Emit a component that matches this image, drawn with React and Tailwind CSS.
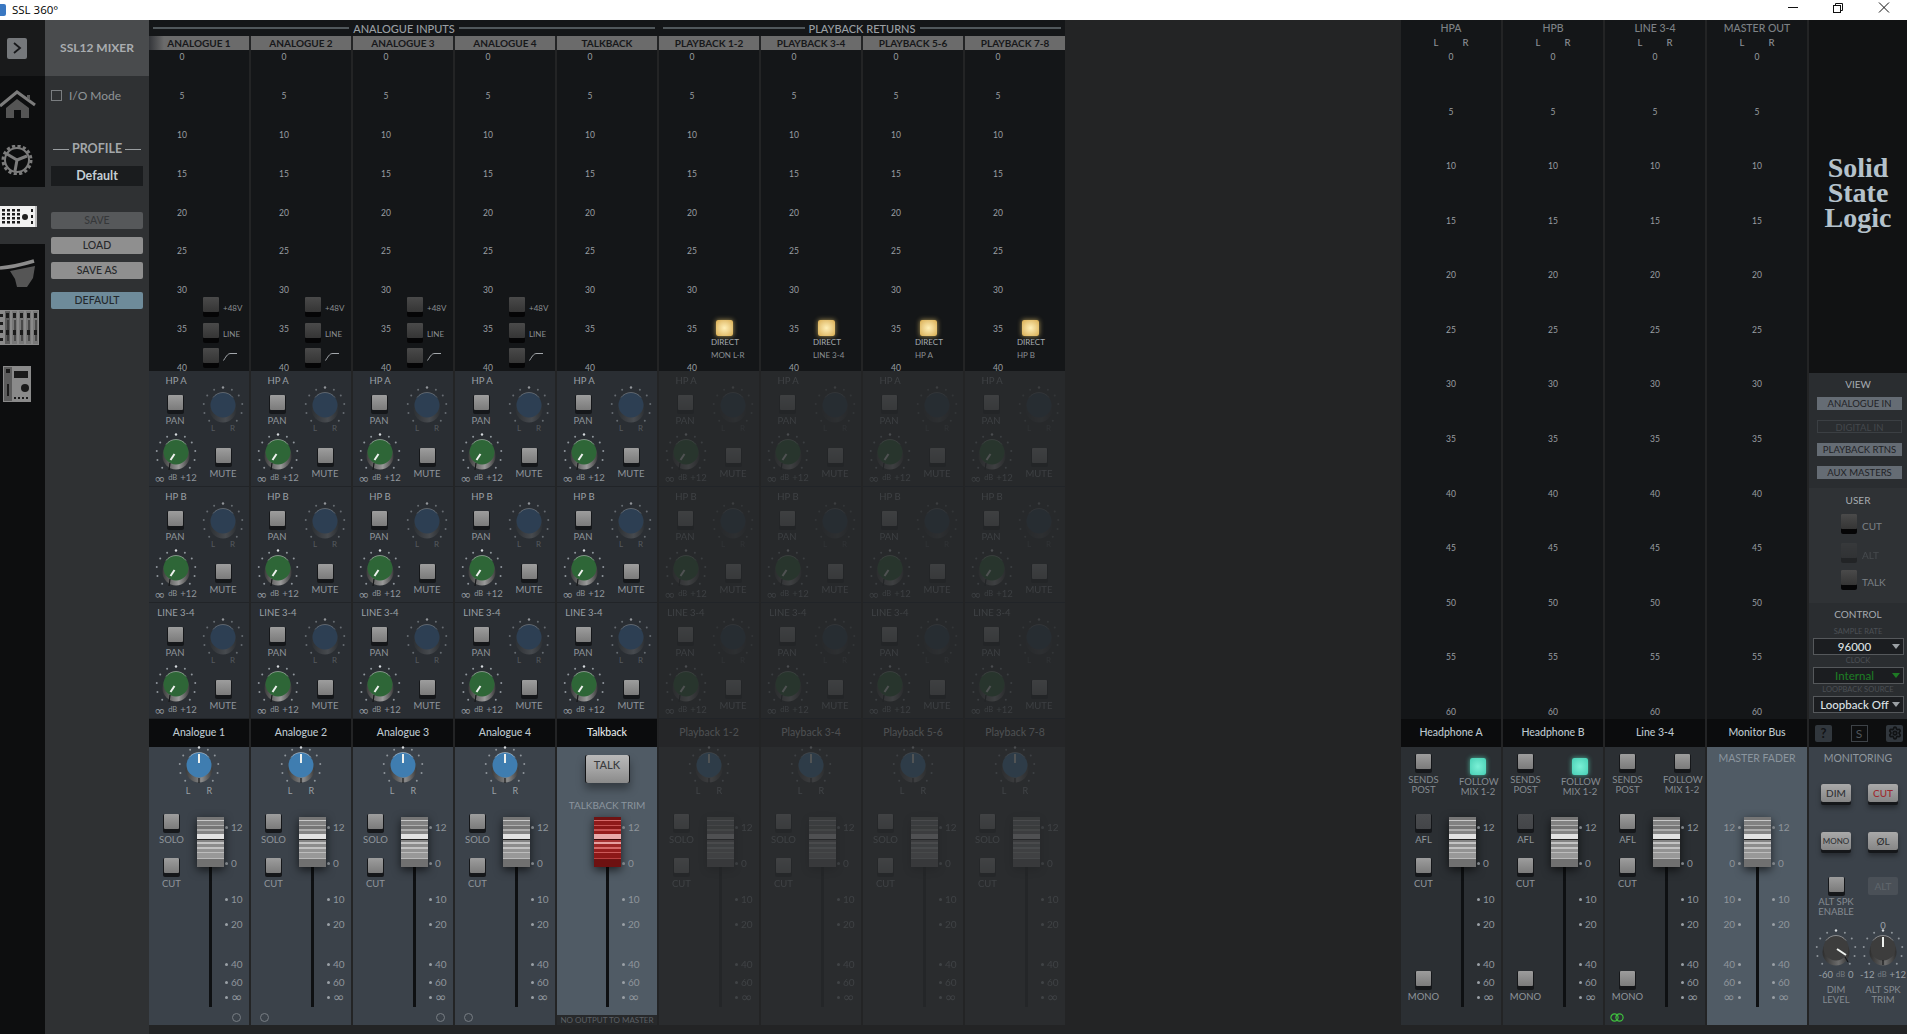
import React, { useId } from 'react';
import { Settings } from 'lucide-react';

const FONT = { fontFamily: 'Lato, "Liberation Sans", sans-serif' };

const FADER_TICKS = [
    ['12', 'h-[36px]'],
    ['0', 'h-[36px]'],
    ['10', 'h-[25px]'],
    ['20', 'h-[40px]'],
    ['40', 'h-[18px]'],
    ['60', 'h-[15px]'],
    ['∞', 'h-[12px]'],
];

const GREY_STRIPES = [
    [0, 3, '#767676'], [3, 1, '#c8c8c8'], [4, 4, '#828282'], [8, 1, '#b0b0b0'], [9, 3, '#767676'], [12, 2, '#adadad'],
    [14, 3, '#848484'], [17, 5, '#e2e2e2'], [22, 1, '#222222'], [23, 2, '#848484'], [25, 2, '#c4c4c4'], [27, 3, '#8c8c8c'],
    [30, 2, '#c2c2c2'], [32, 3, '#929292'], [35, 1, '#bcbcbc'], [36, 5, '#989898'], [41, 1, '#b8b8b8'], [42, 8, '#707070'],
];

const RED_STRIPES = [
    [0, 3, '#6f1313'], [3, 1, '#d86a6a'], [4, 4, '#8f1a1a'], [8, 1, '#c65252'], [9, 3, '#8a1717'], [12, 2, '#c65252'],
    [14, 3, '#941c1c'], [17, 5, '#e8a9a9'], [22, 1, '#3a0808'], [23, 2, '#a43232'], [25, 2, '#e6a0a0'], [27, 3, '#9c2626'],
    [30, 2, '#d66a6a'], [32, 3, '#951d1d'], [35, 1, '#cc5a5a'], [36, 5, '#8d1818'], [41, 1, '#b84040'], [42, 8, '#6d1111'],
];

const InfinityMark = ({ className = 'text-[14px]' }) => (
    <span className={`font-['DejaVu_Sans'] leading-none ${className}`}>∞</span>
);

const Label = ({ children, className = 'h-[14px]' }) => (
    <div className={`flex items-center justify-center leading-none whitespace-nowrap text-[9.5px] text-[#8f959b] ${className}`}>
        {children}
    </div>
);

const SquareButton = ({ off }) => (
    <div className="mx-auto w-[17px] h-[19px] rounded-[2px] bg-[#15171a]">
        <div className={`mx-auto w-[15px] h-[15px] rounded-[1px] bg-linear-to-b ${off ? 'from-[#4a4c4f] to-[#434548]' : 'from-[#9d9d9d] to-[#7b7b7b]'}`} />
    </div>
);

const DarkButton = () => (
    <div className="w-[16px] h-[20px] rounded-[2px] bg-[#050506]">
        <div className="w-[16px] h-[15px] rounded-[1px] bg-linear-to-b from-[#4a4a4a] to-[#353535]" />
    </div>
);

const Knob = ({ cap, ptr, notch = [0, 10, 0, 16], height = 36, cy = 18, skirt = ['#7b7b7b', '#3a3a3a'] }) => {
    const id = useId();
    const dots = Array.from({ length: 11 }, (_, i) => {
        const a = ((-135 + i * 27) * Math.PI) / 180;
        return [22 + 19.5 * Math.sin(a), cy - 19.5 * Math.cos(a), i === 5];
    });
    return (
        <svg width="44" height={height} className="mx-auto block overflow-visible">
            <defs>
                <linearGradient id={id} x1="0" y1="0" x2="1" y2="0">
                    <stop offset="0" stopColor={skirt[1]} />
                    <stop offset="0.6" stopColor={skirt[0]} />
                    <stop offset="1" stopColor={skirt[1]} />
                </linearGradient>
            </defs>
            {dots.map(([x, y, top], i) => (
                <circle key={i} cx={x} cy={y} r={top ? 1.2 : 1} fill={top ? '#d6dadd' : '#8e959b'} />
            ))}
            <circle cx="22" cy={cy + 2} r="13.5" fill={`url(#${id})`} />
            <circle cx="22" cy={cy - 2} r="12.5" fill={cap} />
            <path d={`M12 ${cy - 9.5} A12.5 12.5 0 0 1 32 ${cy - 9.5}`} fill="none" stroke="#ffffff" strokeOpacity="0.4" strokeWidth="1" />
            <line x1={22 + notch[0]} y1={cy + notch[1]} x2={22 + notch[2]} y2={cy + notch[3]} stroke="#17181a" strokeWidth="1.2" />
            {ptr && <line x1={22 + ptr[0]} y1={cy + ptr[1]} x2={22 + ptr[2]} y2={cy + ptr[3]} stroke="#eef1ee" strokeWidth="2" />}
        </svg>
    );
};

const FaderCap = ({ red }) => (
    <svg width="27" height="50" className="absolute top-[22px] left-[3px] drop-shadow-[0_3px_5px_rgba(0,0,0,0.65)]">
        {(red ? RED_STRIPES : GREY_STRIPES).map(([y, h, fill]) => (
            <rect key={y} x="0" y={y} width="27" height={h} fill={fill} />
        ))}
    </svg>
);

const Fader = ({ red, className = 'w-[33px]' }) => (
    <div className={`relative pt-[23px] shrink-0 ${className}`}>
        <div className="mx-auto w-[3px] h-[189px] bg-[#0e1012]" />
        <FaderCap red={red} />
    </div>
);

const Scale = ({ left, className = '' }) => (
    <div className={`pt-[26px] ${className}`}>
        {FADER_TICKS.map(([label, h]) => (
            <div key={label} className={h}>
                <div className={`flex items-center gap-[3px] h-[12px] text-[10px] leading-none text-[#8f959b] ${left ? 'justify-end' : ''}`}>
                    {!left && <span className="w-[3px] h-[3px] rounded-full bg-[#9aa0a6]" />}
                    {label === '∞' ? <InfinityMark /> : <span>{label}</span>}
                    {left && <span className="w-[3px] h-[3px] rounded-full bg-[#9aa0a6]" />}
                </div>
            </div>
        ))}
    </div>
);

const MeterScale = ({ count, step, className }) => (
    <div className={`relative top-[1px] flex flex-col justify-between text-[8.5px] leading-[12px] text-[#9a9ea2] text-center ${className}`}>
        {Array.from({ length: count }, (_, i) => (
            <div key={i}>{i * step}</div>
        ))}
    </div>
);

const CurveIcon = () => (
    <svg width="15" height="9" className="mt-[4px]">
        <path d="M0.5 8.5 C4 3 5 1.5 8 1.5 L14 1.5" fill="none" stroke="#a4a8ac" strokeWidth="1" />
    </svg>
);

const InputSwitches = () => (
    <div className="pt-[247px] ml-[-12px] text-[8px] leading-none text-[#8a8e92]">
        {['+48V', 'LINE', null].map((t, i) => (
            <div key={i} className={`flex gap-[4px] ${i === 2 ? 'h-[20px]' : i === 0 ? 'h-[26px]' : 'h-[25px]'}`}>
                <DarkButton />
                {t ? <span className="mt-[7px]">{t}</span> : <CurveIcon />}
            </div>
        ))}
    </div>
);

const DirectSwitch = ({ dest }) => (
    <div className="pt-[270px] ml-[-14px] text-[8px] leading-none text-[#8a8e92]">
        <div className="ml-[5px] w-[17px] h-[16px] rounded-[2px] bg-radial from-[#fff0b8] to-[#d8ac4e] shadow-[0_0_5px_rgba(240,205,110,0.7)]" />
        <div className="mt-[2px] h-[10px] w-[26px] text-center text-[8px] text-[#a6abb0]">DIRECT</div>
        <div className="mt-[3px] h-[10px] whitespace-nowrap">{dest}</div>
    </div>
);

const Send = ({ name, dim }) => (
    <div className={`h-[116px] border-b border-[#212428] ${dim ? 'bg-[#27292b]' : 'bg-[#2a2e33]'}`}>
        <div className={dim ? 'opacity-20' : ''}>
            <div className="pl-[2px] w-[52px] h-[20px] flex items-center justify-center text-[9.5px] leading-none text-[#9aa0a6] whitespace-nowrap">{name}</div>
            <div className="grid grid-cols-[52px_44px] grid-rows-[44px_52px]">
                <div className="pt-[4px]">
                    <SquareButton />
                    <Label>PAN</Label>
                </div>
                <div>
                    <div className="opacity-60">
                        <Knob cap="#2f4b69" height={32} cy={16} skirt={['#5b5e62', '#2f3235']} notch={[0, 9, 0, 9]} />
                    </div>
                    <div className="flex justify-between px-[10px] h-[10px] items-center text-[8px] leading-none text-[#555a5f]">
                        <span>L</span>
                        <span>R</span>
                    </div>
                </div>
                <div className="ml-[1px]">
                    <Knob cap="#2e6637" ptr={[-5.5, 6, -1.5, 0]} notch={[-6, 9, -7, 16]} height={37} cy={19} skirt={['#9a9a9a', '#3c3c3c']} />
                    <div className="flex items-center justify-center gap-[3px] h-[12px] text-[9px] leading-none text-[#8f959b] whitespace-nowrap">
                        <InfinityMark className="text-[13px]" />
                        <span className="text-[7.5px]">dB</span>
                        <span className="text-[9.5px]">+12</span>
                    </div>
                </div>
                <div className="pt-[13px]">
                    <SquareButton />
                    <Label>MUTE</Label>
                </div>
            </div>
        </div>
    </div>
);

const Name = ({ children, dim, bright }) => (
    <div className={`h-[28px] flex items-center justify-center text-[10.5px] font-medium whitespace-nowrap ${dim ? 'bg-[#252628] text-[#4c4e50]' : bright ? 'bg-[#0b0c0d] text-[#e4e8ea]' : 'bg-[#0b0c0d] text-[#bdc8cf]'}`}>
        {children}
    </div>
);

const ChannelFader = ({ dim, link }) => (
    <div className={`relative h-[278px] ${dim ? 'bg-[#2a2c2e]' : 'bg-[#3b424a]'}`}>
        <div className={dim ? 'opacity-20' : ''}>
            <div className="pt-[2px] h-[38px]">
                <Knob cap="#3f7db0" ptr={[0, -4, 0, -13]} notch={[0, 11, 0, 16]} skirt={['#8a8a8a', '#3a3a3a']} />
            </div>
            <div className="flex justify-center gap-[16px] h-[10px] items-center text-[9px] leading-none text-[#9aa0a6]">
                <span>L</span>
                <span>R</span>
            </div>
            <div className="flex">
                <div className="w-[45px] shrink-0 pt-[19px]">
                    <SquareButton />
                    <Label>SOLO</Label>
                    <div className="mt-[11px]">
                        <SquareButton />
                        <Label>CUT</Label>
                    </div>
                </div>
                <Fader />
                <Scale className="-ml-[2px]" />
            </div>
        </div>
        {link === 'right' && <span className="absolute left-[83px] bottom-[3px] w-[9px] h-[9px] rounded-full border border-[#777d83]" />}
        {link === 'left' && <span className="absolute left-[9px] bottom-[3px] w-[9px] h-[9px] rounded-full border border-[#777d83]" />}
    </div>
);

const TalkbackFader = () => (
    <div className="h-[278px] bg-[#27292b]">
        <div className="h-[268px] bg-[#505b65]">
            <div className="pt-[8px]">
                <div className="mx-auto w-[45px] h-[28px] rounded-[2px] bg-[#121315] shadow-[0_6px_8px_rgba(0,0,0,0.35)]">
                    <div className="mx-auto w-[43px] h-[28px] rounded-[2px] bg-linear-to-b from-[#b9b9b9] via-[#a4a4a4] to-[#8a8a8a] text-center text-[11px] font-medium leading-[20px] text-[#3a3c3e]">
                        TALK
                    </div>
                </div>
            </div>
            <div className="mt-[16px] h-[12px] flex items-center justify-center text-[10px] leading-none text-[#8b959e]">TALKBACK TRIM</div>
            <div className="flex -mt-[16px] pl-[34px]">
                <Fader red />
                <Scale className="-ml-[2px]" />
            </div>
        </div>
        <div className="h-[10px] flex items-center justify-center text-[8px] leading-none whitespace-nowrap text-[#5c6065]">NO OUTPUT TO MASTER</div>
    </div>
);

const Channel = ({ title, name, dim, link, talkback, dest, edge }) => (
    <div className="w-[100px] mr-[2px]">
        <div className={`h-[14px] text-center text-[10px] font-bold leading-[14px] text-[#17181a] whitespace-nowrap ${edge ? 'bg-linear-to-r from-[#34363a] to-[#6b6b6b] to-[15%]' : 'bg-[#6b6b6b]'}`}>{title}</div>
        <div className="relative z-10 flex h-[321px] bg-[#141618]">
            <MeterScale count={9} step={5} className="w-[66px] h-[323px]" />
            {dest ? <DirectSwitch dest={dest} /> : !talkback && <InputSwitches />}
        </div>
        <Send name="HP A" dim={dim} />
        <Send name="HP B" dim={dim} />
        <Send name="LINE 3-4" dim={dim} />
        <Name dim={dim} bright={talkback}>{name}</Name>
        {talkback ? <TalkbackFader /> : <ChannelFader dim={dim} link={link} />}
    </div>
);

const StripMeter = ({ title }) => (
    <div className="h-[699px] bg-[#141618]">
        <div className="h-[16px] flex items-center justify-center text-[10.5px] font-medium leading-none text-[#7e8286] whitespace-nowrap">{title}</div>
        <div className="h-[14px] flex justify-center gap-[24px] items-center text-[9.5px] font-medium leading-none text-[#8d9195]">
            <span>L</span>
            <span>R</span>
        </div>
        <MeterScale count={13} step={5} className="h-[667px]" />
    </div>
);

const MiniLabel = ({ lines, className = '' }) => (
    <div className={`text-center text-[9.5px] leading-[10px] text-[#858b91] whitespace-nowrap ${className}`}>
        {lines.map((l) => <div key={l}>{l}</div>)}
    </div>
);

const OutputStrip = ({ title, name, follow, afl, link }) => (
    <div className="w-[100px] mr-[2px]">
        <StripMeter title={title} />
        <Name>{name}</Name>
        <div className="relative h-[278px] bg-[#2b2f33]">
            <div className="flex h-[48px]">
                <div className="w-[45px] pt-[7px]">
                    <SquareButton />
                    <MiniLabel lines={['SENDS', 'POST']} className="mt-[2px]" />
                </div>
                <div className="ml-[13px] w-[38px]">
                    {follow ? (
                        <div className="mt-[11px] mb-[1px] mx-auto w-[16px] h-[17px] rounded-[2px] bg-radial from-[#7af0d6] to-[#45cfb4] shadow-[0_0_5px_rgba(90,235,200,0.7)]" />
                    ) : (
                        <div className="mt-[7px]"><SquareButton /></div>
                    )}
                    <MiniLabel lines={['FOLLOW', 'MIX 1-2']} className="mt-[2px]" />
                </div>
            </div>
            <div className="flex">
                <div className="w-[45px] shrink-0 pt-[19px]">
                    <SquareButton off={afl} />
                    <Label>AFL</Label>
                    <div className="mt-[11px]">
                        <SquareButton />
                        <Label>CUT</Label>
                    </div>
                    <div className="mt-[80px]">
                        <SquareButton />
                        <Label>MONO</Label>
                    </div>
                </div>
                <Fader />
                <Scale className="-ml-[2px]" />
            </div>
            {link && (
                <svg width="14" height="9" className="absolute left-[5px] bottom-[3px]">
                    <circle cx="4.5" cy="4.5" r="3.6" fill="none" stroke="#3fc03f" strokeWidth="1.2" />
                    <circle cx="9.5" cy="4.5" r="3.6" fill="none" stroke="#3fc03f" strokeWidth="1.2" />
                </svg>
            )}
        </div>
    </div>
);

const MasterStrip = () => (
    <div className="w-[100px] mr-[2px]">
        <StripMeter title="MASTER OUT" />
        <Name>Monitor Bus</Name>
        <div className="h-[278px] bg-[#505b65]">
            <div className="h-[48px] pt-[5px] text-center text-[10.5px] leading-[12px] text-[#8b959e]">MASTER FADER</div>
            <div className="flex">
                <Scale left className="w-[34px] shrink-0" />
                <Fader className="w-[33px]" />
                <Scale className="-ml-[2px]" />
            </div>
        </div>
    </div>
);

const ViewButton = ({ children, off }) => (
    <div className={`ml-[8px] w-[85px] h-[13px] mb-[10px] text-center text-[9.5px] leading-[13px] whitespace-nowrap ${off ? 'border border-[#3b3f43] text-[#44484c] leading-[11px]' : 'bg-[#656c74] text-[#1f2226]'}`}>
        {children}
    </div>
);

const Select = ({ value, green }) => (
    <div className={`ml-[4px] w-[91px] h-[17px] border border-[#55585b] bg-[#1b1d20] flex items-center justify-center text-[11.5px] leading-none font-medium ${green ? 'text-[#1e7a24]' : 'text-[#dde1e4]'}`}>
        <span className="flex-1 text-center whitespace-nowrap pl-[3px]">{value}</span>
        <span className={`mr-[3px] w-0 h-0 border-x-[4px] border-x-transparent border-t-[5px] ${green ? 'border-t-[#1e7a24]' : 'border-t-[#9ba0a4]'}`} />
    </div>
);

const RaisedButton = ({ children, red, off, small }) => (
    <div className={`mx-auto w-[30px] h-[21px] rounded-[2px] ${off ? '' : 'bg-[#15171a] shadow-[0_3px_5px_rgba(0,0,0,0.35)]'}`}>
        <div className={`h-[18px] rounded-[2px] text-center font-medium leading-[18px] ${small ? 'text-[8px]' : 'text-[10px]'} ${off ? 'bg-[#4a5057] text-[#5f656b]' : 'bg-linear-to-b from-[#a9a9a9] to-[#868686]'} ${red ? 'text-[#9e2a2f]' : off ? '' : 'text-[#2e3033]'}`}>
            {children}
        </div>
    </div>
);

const RightPanel = () => (
    <div className="flex-1 flex flex-col">
        <div className="h-[353px] bg-[#111213] flex flex-col items-center pt-[135px] text-[28px] font-bold leading-[25px] text-[#b5c2cb]" style={{ fontFamily: '"Liberation Serif", serif' }}>
            <div>Solid</div>
            <div>State</div>
            <div>Logic</div>
        </div>
        <div className="h-[115px] bg-[#2a2d30]">
            <div className="h-[22px] flex items-center justify-center text-[10px] leading-none text-[#a6abb0]">VIEW</div>
            <div className="pt-[2px]">
                <ViewButton>ANALOGUE IN</ViewButton>
                <ViewButton off>DIGITAL IN</ViewButton>
                <ViewButton>PLAYBACK RTNS</ViewButton>
                <ViewButton>AUX MASTERS</ViewButton>
            </div>
        </div>
        <div className="h-[115px] bg-[#2f3235]">
            <div className="h-[24px] flex items-center justify-center text-[10px] leading-none text-[#a6abb0]">USER</div>
            <div className="pt-[2px] pl-[32px] text-[10px] leading-none text-[#7b8085]">
                <div className="flex gap-[5px] h-[29px]">
                    <DarkButton />
                    <span className="mt-[7px]">CUT</span>
                </div>
                <div className="flex gap-[5px] h-[27px] opacity-30">
                    <DarkButton />
                    <span className="mt-[7px]">ALT</span>
                </div>
                <div className="flex gap-[5px]">
                    <DarkButton />
                    <span className="mt-[7px]">TALK</span>
                </div>
            </div>
        </div>
        <div className="h-[116px] bg-[#2a2d30]">
            <div className="h-[22px] flex items-center justify-center text-[10px] leading-none text-[#a6abb0]">CONTROL</div>
            <div className="h-[13px] flex items-center justify-center text-[7.5px] leading-none text-[#4c5055]">SAMPLE RATE</div>
            <Select value="96000" />
            <div className="h-[12px] flex items-center justify-center text-[7.5px] leading-none text-[#4c5055]">CLOCK</div>
            <Select value="Internal" green />
            <div className="h-[12px] flex items-center justify-center text-[7.5px] leading-none text-[#4c5055]">LOOPBACK SOURCE</div>
            <Select value="Loopback Off" />
        </div>
        <div className="h-[28px] bg-[#0d0e0f] flex items-center justify-between pl-[6px] pr-[4px]">
            <div className="w-[17px] h-[17px] rounded-[2px] bg-[#31373d] text-center text-[13px] font-bold leading-[17px] text-[#111316]">?</div>
            <div className="w-[17px] h-[17px] border border-[#3d4247] text-center text-[12px] leading-[15px] text-[#50565b]">S</div>
            <div className="w-[17px] h-[17px] rounded-[2px] bg-[#31373d] flex items-center justify-center">
                <Settings size={14} strokeWidth={3} className="text-[#101214]" />
            </div>
        </div>
        <div className="h-[278px] bg-[#3b424a]">
            <div className="h-[22px] flex items-center justify-center text-[10.5px] leading-none text-[#8f979e]">MONITORING</div>
            <div className="pl-[2px] grid grid-cols-[50px_44px] grid-rows-[15px_48px_45px_41px]">
                <div className="col-span-2" />
                <RaisedButton>DIM</RaisedButton>
                <RaisedButton red>CUT</RaisedButton>
                <RaisedButton small>MONO</RaisedButton>
                <RaisedButton>ØL</RaisedButton>
                <div>
                    <SquareButton />
                    <MiniLabel lines={['ALT SPK', 'ENABLE']} className="mt-[1px]" />
                </div>
                <RaisedButton off>ALT</RaisedButton>
                <div className="pt-[14px]">
                    <Knob cap="#3d3d3d" ptr={[10, 5, 1, -1]} notch={[9, 7, 12, 12]} skirt={['#6d6d6d', '#2e2e2e']} />
                    <div className="flex items-center justify-center gap-[3px] h-[14px] text-[9.5px] leading-none text-[#9aa0a6]">
                        <span>-60</span>
                        <span className="text-[7.5px] text-[#777d83]">dB</span>
                        <span>0</span>
                    </div>
                    <MiniLabel lines={['DIM', 'LEVEL']} className="mt-[3px]" />
                </div>
                <div>
                    <div className="h-[14px] pt-[3px] text-center text-[9.5px] leading-[10px] text-[#9aa0a6]">0</div>
                    <Knob cap="#3d3d3d" ptr={[0, -3, 0, -13]} notch={[0, 10, 0, 15]} skirt={['#6d6d6d', '#2e2e2e']} />
                    <div className="flex items-center justify-center gap-[3px] h-[14px] text-[9.5px] leading-none text-[#9aa0a6] whitespace-nowrap">
                        <span>-12</span>
                        <span className="text-[7.5px] text-[#777d83]">dB</span>
                        <span>+12</span>
                    </div>
                    <MiniLabel lines={['ALT SPK', 'TRIM']} className="mt-[3px]" />
                </div>
            </div>
        </div>
    </div>
);

const GroupHeader = ({ label, className }) => (
    <div className={`flex items-center gap-[4px] h-[16px] bg-[#141618] ${className}`}>
        <div className="flex-1 h-[2px] bg-[#50575b]" />
        <span className="text-[11px] font-medium leading-none text-[#9a9fa3] whitespace-nowrap">{label}</span>
        <div className="flex-1 h-[2px] bg-[#50575b]" />
    </div>
);

const HomeIcon = () => (
    <svg width="36" height="28" className="block">
        <path d="M0 16 L17 2 L35 15" fill="none" stroke="#7c7c7c" strokeWidth="3" />
        <path d="M27 5 L30 5 L30 10 L27 8 Z" fill="#5c5c5c" />
        <path d="M6 18 L17 9 L29 18 L29 28 L21 28 L21 20 L14 20 L14 28 L6 28 Z" fill="#555555" />
    </svg>
);

const GearIcon = () => (
    <svg width="36" height="30" className="block">
        <circle cx="17" cy="15" r="12" fill="none" stroke="#7c7c7c" strokeWidth="2" />
        <circle cx="17" cy="15" r="14" fill="none" stroke="#7c7c7c" strokeWidth="3" strokeDasharray="3.2 2.3" />
        <path d="M17 15 L7 9 M17 15 L27 11 M17 15 L15 26" stroke="#7c7c7c" strokeWidth="3" />
    </svg>
);

const UnitIcon = () => (
    <svg width="37" height="21" className="block">
        <rect x="0" y="0" width="37" height="21" fill="#f1f1f1" />
        <rect x="35" y="0" width="2" height="21" fill="#bdbdbd" />
        {[0, 1, 2, 3].map((r) => [0, 1, 2, 3].map((c) => (
            <rect key={`${r}-${c}`} x={2 + c * 5} y={3 + r * 4} width="3" height="2.5" fill="#1d1d1d" />
        )))}
        <circle cx="25" cy="11" r="3" fill="#1d1d1d" />
        <rect x="31" y="3" width="2" height="3" fill="#1d1d1d" />
        <rect x="31" y="9" width="2" height="3" fill="#1d1d1d" />
        <rect x="31" y="15" width="2" height="3" fill="#1d1d1d" />
    </svg>
);

const DeskIcon = () => (
    <svg width="36" height="31" className="block">
        <path d="M0 11 C14 10 24 7 34 4" fill="none" stroke="#8c8c8c" strokeWidth="3.5" />
        <path d="M10 14 L35 9 L33 21 L27 30 L17 30 L15 22 Z" fill="#555555" />
    </svg>
);

const ConsoleIcon = () => (
    <svg width="39" height="35" className="block">
        <rect x="0" y="0" width="39" height="35" fill="#8a8a8a" />
        {[8, 15, 22, 29, 36].map((x) => (
            <g key={x}>
                <rect x={x - 3} y="1" width="5" height="33" fill={x === 8 ? '#5c5c5c' : '#777777'} />
                <rect x={x - 2} y="3" width="3" height="5" fill="#1a1a1a" />
                <rect x={x - 0.5} y="10" width="1" height="21" fill="#1a1a1a" />
                <rect x={x - 2} y="20" width="3" height="5" fill="#1a1a1a" />
            </g>
        ))}
        {[4, 12, 20, 28].map((y) => <rect key={y} x="0" y={y} width="3" height="3" fill="#1a1a1a" />)}
    </svg>
);

const RemoteIcon = () => (
    <svg width="28" height="36" className="block">
        <rect x="0" y="0" width="28" height="36" fill="#8a8a8a" />
        <rect x="1" y="1" width="8" height="34" fill="#5c5c5c" />
        <rect x="11" y="5" width="14" height="7" fill="#1a1a1a" />
        <circle cx="22" cy="22" r="4" fill="#1a1a1a" />
        <rect x="4" y="18" width="2" height="12" fill="#1a1a1a" />
        <rect x="3" y="3" width="4" height="4" fill="#1a1a1a" />
        {[11, 15, 19, 23].map((x) => <rect key={x} x={x} y="31" width="2" height="2" fill="#1a1a1a" />)}
    </svg>
);

const Sidebar = () => (
    <div className="w-[45px] flex flex-col">
        <div className="h-[56px] bg-[#191a1b] flex items-center pl-[7px]">
            <div className="w-[20px] h-[21px] rounded-[2px] bg-[#75787b] flex items-center justify-center">
                <svg width="10" height="12"><path d="M2 1 L8 6 L2 11" fill="none" stroke="#17181a" strokeWidth="1.8" /></svg>
            </div>
        </div>
        <div className="h-[111px] bg-[#0d0e0f] pt-[14px]">
            <HomeIcon />
            <div className="mt-[27px]"><GearIcon /></div>
        </div>
        <div className="h-[57px] pt-[19px] bg-[#2f3133]">
            <UnitIcon />
        </div>
        <div className="flex-1 bg-[#0d0e0f] pt-[13px]">
            <DeskIcon />
            <div className="mt-[22px]"><ConsoleIcon /></div>
            <div className="mt-[21px] ml-[3px]"><RemoteIcon /></div>
        </div>
    </div>
);

const ProfileButton = ({ children, className }) => (
    <div className={`mx-[6px] h-[17px] rounded-[2px] text-center text-[10.5px] font-medium leading-[17px] ${className}`}>{children}</div>
);

const ProfilePanel = () => (
    <div className="w-[104px] bg-[#2f3133]">
        <div className="h-[56px] bg-[#494b4d] flex items-center justify-center text-[12px] font-bold leading-none text-[#a9adb0]">SSL12 MIXER</div>
        <div className="flex items-center pt-[14px] pl-[6px]">
            <div className="w-[11px] h-[11px] border border-[#7a7d80]" />
            <span className="ml-[7px] text-[12px] leading-[11px] text-[#8f9497]">I/O Mode</span>
        </div>
        <div className="mt-[41px] mx-[8px] flex items-center gap-[3px] h-[14px]">
            <div className="flex-1 h-px bg-[#9a9ea1]" />
            <span className="text-[12.5px] font-bold leading-none text-[#a3a7aa]">PROFILE</span>
            <div className="flex-1 h-px bg-[#9a9ea1]" />
        </div>
        <div className="mt-[10px] mx-[6px] h-[20px] bg-[#1a1c1e] text-center text-[12.5px] font-bold leading-[20px] text-[#c5ced4]">Default</div>
        <ProfileButton className="mt-[26px] bg-[#56585a] text-[#36383a]">SAVE</ProfileButton>
        <ProfileButton className="mt-[8px] bg-[#8f8f8f] text-[#26282a]">LOAD</ProfileButton>
        <ProfileButton className="mt-[8px] bg-[#8f8f8f] text-[#26282a]">SAVE AS</ProfileButton>
        <ProfileButton className="mt-[13px] bg-[#6e8b9a] text-[#23282c]">DEFAULT</ProfileButton>
    </div>
);

const TitleBar = () => (
    <div className="h-[20px] bg-white flex items-center">
        <div className="w-[6px] h-[12px] rounded-r-[2px] bg-[#3a78c2]" />
        <span className="ml-[6px] text-[11.5px] leading-none text-black" style={{ fontFamily: '"Open Sans", sans-serif' }}>SSL 360°</span>
        <div className="flex-1" />
        <svg width="119" height="20" className="block">
            <line x1="0" y1="7.5" x2="10" y2="7.5" stroke="#111" />
            <rect x="45.5" y="5.5" width="7" height="7" fill="none" stroke="#111" />
            <path d="M47.5 5.5 V3.5 H54.5 V10.5 H52.5" fill="none" stroke="#111" />
            <path d="M91 2.5 L101 12.5 M101 2.5 L91 12.5" stroke="#111" />
        </svg>
    </div>
);

const INPUTS = [
    { title: 'ANALOGUE 1', name: 'Analogue 1', link: 'right', edge: true },
    { title: 'ANALOGUE 2', name: 'Analogue 2', link: 'left' },
    { title: 'ANALOGUE 3', name: 'Analogue 3', link: 'right' },
    { title: 'ANALOGUE 4', name: 'Analogue 4', link: 'left' },
    { title: 'TALKBACK', name: 'Talkback', talkback: true },
    { title: 'PLAYBACK 1-2', name: 'Playback 1-2', dim: true, dest: 'MON L-R' },
    { title: 'PLAYBACK 3-4', name: 'Playback 3-4', dim: true, dest: 'LINE 3-4' },
    { title: 'PLAYBACK 5-6', name: 'Playback 5-6', dim: true, dest: 'HP A' },
    { title: 'PLAYBACK 7-8', name: 'Playback 7-8', dim: true, dest: 'HP B' },
];

export default function App() {
    return (
        <div className="w-[1907px] h-[1034px] overflow-hidden bg-[#232425]" style={FONT}>
            <TitleBar />
            <div className="flex h-[1014px]">
                <Sidebar />
                <ProfilePanel />
                <div className="w-[918px] shrink-0">
                    <div className="flex">
                        <GroupHeader label="ANALOGUE INPUTS" className="w-[510px] pl-[4px] pr-[4px]" />
                        <GroupHeader label="PLAYBACK RETURNS" className="w-[406px] pl-[4px] pr-[4px]" />
                    </div>
                    <div className="flex">
                        {INPUTS.map((c) => (
                            <Channel key={c.title} {...c} />
                        ))}
                    </div>
                </div>
                <div className="w-[334px] shrink-0" />
                <OutputStrip title="HPA" name="Headphone A" follow afl />
                <OutputStrip title="HPB" name="Headphone B" follow afl />
                <OutputStrip title="LINE 3-4" name="Line 3-4" link />
                <MasterStrip />
                <RightPanel />
            </div>
        </div>
    );
}
